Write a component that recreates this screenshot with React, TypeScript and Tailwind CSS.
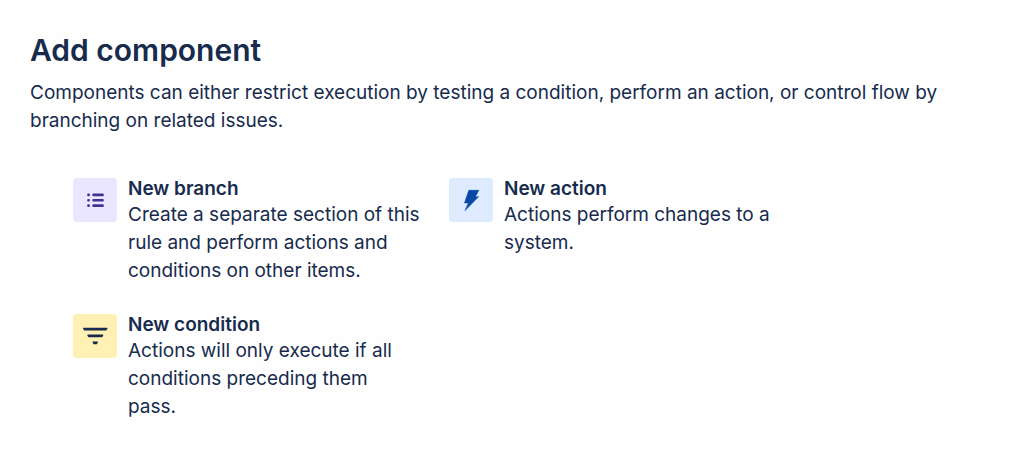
import { ReactNode } from "react";

type ComponentOption = {
  title: string;
  description: string;
  tile: string;
  icon: ReactNode;
};

const BranchIcon = () => (
  <svg viewBox="0 0 44 44" className="w-11 h-11" fill="currentColor" aria-hidden="true">
    <rect x="14.2" y="15.5" width="2.7" height="2.7" rx="1" />
    <rect x="14.2" y="20.9" width="2.7" height="2.7" rx="1" />
    <rect x="14.2" y="26.3" width="2.7" height="2.7" rx="1" />
    <rect x="19.3" y="15.5" width="11.5" height="2.7" rx="1" />
    <rect x="19.3" y="20.9" width="11.5" height="2.7" rx="1" />
    <rect x="19.3" y="26.3" width="11.5" height="2.7" rx="1" />
  </svg>
);

const ActionIcon = () => (
  <svg viewBox="0 0 44 44" className="w-11 h-11" fill="currentColor" aria-hidden="true">
    <path
      d="M19.8 12.3H29.8L26.3 18.8H29.5L16 32.6L19.4 24.9H15.5Z"
      stroke="currentColor"
      strokeWidth="0.6"
      strokeLinejoin="round"
    />
  </svg>
);

const ConditionIcon = () => (
  <svg viewBox="0 0 44 44" className="w-11 h-11" fill="currentColor" aria-hidden="true">
    <path d="M10.6 13.7H33.9Q34.6 13.7 34.4 14.5L34 15.6Q33.7 16.4 33 16.4H11.5Q10.8 16.4 10.5 15.6L10.1 14.5Q9.9 13.7 10.6 13.7Z" />
    <path d="M14.8 20.5H29.8Q30.6 20.5 30.3 21.3L29.7 22.6Q29.4 23.3 28.7 23.3H15.8Q15.2 23.3 14.9 22.6L14.3 21.3Q14 20.5 14.8 20.5Z" />
    <path d="M20 27.4H24.5Q25.3 27.4 25 28.1L24.2 29.7Q23.9 30.3 23.2 30.3H21.3Q20.6 30.3 20.3 29.7L19.5 28.1Q19.2 27.4 20 27.4Z" />
  </svg>
);

const options: ComponentOption[] = [
  {
    title: "New branch",
    description: "Create a separate section of this rule and perform actions and conditions on other items.",
    tile: "bg-[#eae6ff] text-[#403294]",
    icon: <BranchIcon />,
  },
  {
    title: "New action",
    description: "Actions perform changes to a system.",
    tile: "bg-[#deebff] text-[#0747a6]",
    icon: <ActionIcon />,
  },
  {
    title: "New condition",
    description: "Actions will only execute if all conditions preceding them\npass.",
    tile: "bg-[#fff0b3] text-[#172b4d]",
    icon: <ConditionIcon />,
  },
];

const OptionButton = ({ title, description, tile, icon }: ComponentOption) => (
  <button type="button" className="flex items-start gap-[11px] text-left">
    <span className={`shrink-0 w-11 h-11 mt-px rounded ${tile}`}>{icon}</span>
    <span className="flex flex-col">
      <span className="text-[19px] leading-6 font-semibold">{title}</span>
      <span className="text-[19px] leading-7 whitespace-pre-line">{description}</span>
    </span>
  </button>
);

const App = () => (
  <main className="min-h-screen bg-[#fefefe] px-[30px] pt-7 pb-8 font-['Inter',sans-serif] text-[#172b4d]">
    <h1 className="text-[30px] leading-11 font-semibold">Add component</h1>
    <p className="mt-[7px] max-w-[920px] text-[19px] leading-7">
      Components can either restrict execution by testing a condition, perform an action, or control flow by branching
      on related issues.
    </p>
    <div className="mt-[42px] ml-[43px] grid max-w-[732px] grid-cols-2 items-start gap-x-5 gap-y-7">
      {options.map((option) => (
        <OptionButton key={option.title} {...option} />
      ))}
    </div>
  </main>
);

export default App;
